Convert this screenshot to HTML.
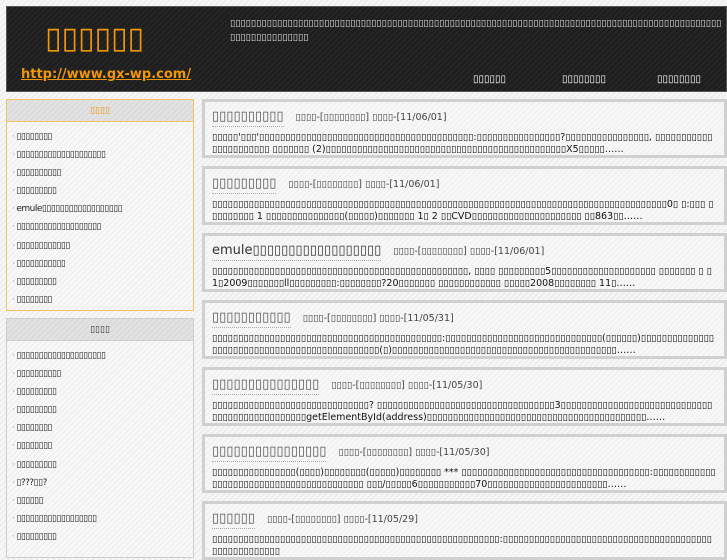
<!DOCTYPE html>
<html><head><meta charset="utf-8"><style>
*{margin:0;padding:0;box-sizing:border-box}
body{width:727px;height:545px;overflow:hidden;font-family:"DejaVu Sans",sans-serif;background:repeating-linear-gradient(-45deg,#f6f6f6 0 3px,#e8e8e8 3px 4px);color:#333}
#hd{position:absolute;left:6px;top:6px;width:721px;height:86px;background:repeating-linear-gradient(-45deg,#1e1e1e 0 3px,#2a2a2a 3px 4px);border:1px solid #555}
#logo{position:absolute;left:38px;top:14px;font-size:30px;color:#f0960a;text-decoration:underline}
#url{position:absolute;left:14px;top:60px;font-size:13px;color:#f0960a;text-decoration:underline;font-weight:bold}
#desc{position:absolute;left:223px;top:10px;width:495px;font-size:9.5px;color:#ddd;line-height:14px;word-break:break-all}
.nav{position:absolute;top:67px;font-size:10px;color:#fff}
.side{position:absolute;left:6px;width:188px;border:1px solid #ccc;background:repeating-linear-gradient(-45deg,#f8f8f8 0 3px,#ececec 3px 4px)}
.side h3{height:22px;line-height:22px;text-align:center;font-size:9px;font-weight:normal;background:repeating-linear-gradient(-45deg,#e2e2e2 0 3px,#d6d6d6 3px 4px);border-bottom:1px solid #ccc}
.side ul{list-style:none;padding:6px 0 0 5px}
.side li{font-size:9px;letter-spacing:-0.5px;line-height:18.1px;color:#222;white-space:nowrap}
.side li:before{content:"·";color:#999;margin-right:2px}
.post{position:absolute;left:202px;width:525px;height:59px;border:3px solid #d0d0d0;background:repeating-linear-gradient(-45deg,#f7f7f7 0 3px,#eeeeee 3px 4px);padding:3px 7px}
.post h2{font-size:13px;font-weight:normal;color:#555;display:inline-block;border-bottom:1px dotted #aaa;line-height:17px;padding-bottom:1px}
.post .m{font-size:9.5px;color:#444;margin-left:12px}
.post p{font-size:9.5px;line-height:12px;margin-top:5px;height:24px;overflow:hidden;word-break:break-all;color:#111}
</style></head><body>
<div id="hd">
<div id="logo">▯▯▯▯▯▯</div>
<div id="url">http://www.gx-wp.com/</div>
<div id="desc">▯▯▯▯▯▯▯▯▯▯▯▯▯▯▯▯▯▯▯▯▯▯▯▯▯▯▯▯▯▯▯▯▯▯▯▯▯▯▯▯▯▯▯▯▯▯▯▯▯▯▯▯▯▯▯▯▯▯▯▯▯▯▯▯▯▯▯▯▯▯▯▯▯▯▯▯▯▯▯▯▯▯▯▯▯▯▯▯▯▯▯▯▯▯▯▯▯▯▯▯▯▯▯▯▯▯▯▯▯</div>
<div class="nav" style="left:466px">▯▯▯▯▯▯</div>
<div class="nav" style="left:555px">▯▯▯▯▯▯▯▯</div>
<div class="nav" style="left:650px">▯▯▯▯▯▯▯▯</div>
</div>
<div class="side" style="top:99px;height:212px;border-color:#f5c060">
<h3 style="color:#f0960a;border-bottom-color:#f5c060">▯▯▯▯</h3>
<ul><li>▯▯▯▯▯▯▯▯</li><li>▯▯▯▯▯▯▯▯▯▯▯▯▯▯▯▯▯▯▯▯</li><li>▯▯▯▯▯▯▯▯▯▯</li><li>▯▯▯▯▯▯▯▯▯</li><li>emule▯▯▯▯▯▯▯▯▯▯▯▯▯▯▯▯▯▯</li><li>▯▯▯▯▯▯▯▯▯▯▯▯▯▯▯▯▯▯▯</li><li>▯▯▯▯▯▯▯▯▯▯▯▯</li><li>▯▯▯▯▯▯▯▯▯▯▯</li><li>▯▯▯▯▯▯▯▯▯</li><li>▯▯▯▯▯▯▯▯</li></ul>
</div>
<div class="side" style="top:318px;height:240px">
<h3>▯▯▯▯</h3>
<ul><li>▯▯▯▯▯▯▯▯▯▯▯▯▯▯▯▯▯▯▯▯</li><li>▯▯▯▯▯▯▯▯▯▯</li><li>▯▯▯▯▯▯▯▯▯</li><li>▯▯▯▯▯▯▯▯▯</li><li>▯▯▯▯▯▯▯▯</li><li>▯▯▯▯▯▯▯▯</li><li>▯▯▯▯▯▯▯▯▯</li><li>▯???▯▯?</li><li>▯▯▯▯▯▯</li><li>▯▯▯▯▯▯▯▯▯▯▯▯▯▯▯▯▯▯</li><li>▯▯▯▯▯▯▯▯▯</li></ul>
</div>
<div class="post" style="top:99px"><h2>▯▯▯▯▯▯▯▯▯▯</h2><span class="m">▯▯▯▯-[▯▯▯▯▯▯▯▯] ▯▯▯▯-[11/06/01]</span><p>▯▯▯▯▯'▯▯▯'▯▯▯▯▯▯▯▯▯▯▯▯▯▯▯▯▯▯▯▯▯▯▯▯▯▯▯▯▯▯▯▯▯▯▯▯▯▯▯▯▯:▯▯▯▯▯▯▯▯▯▯▯▯▯▯▯▯?▯▯▯▯▯▯▯▯▯▯▯▯▯▯▯▯, ▯▯▯▯▯▯▯▯▯▯▯▯▯▯▯▯▯▯▯▯▯▯ ▯▯▯▯▯▯▯ (2)▯▯▯▯▯▯▯▯▯▯▯▯▯▯▯▯▯▯▯▯▯▯▯▯▯▯▯▯▯▯▯▯▯▯▯▯▯▯▯▯▯▯▯▯▯▯X5▯▯▯▯▯……</p></div>
<div class="post" style="top:166px"><h2>▯▯▯▯▯▯▯▯▯</h2><span class="m">▯▯▯▯-[▯▯▯▯▯▯▯▯] ▯▯▯▯-[11/06/01]</span><p>▯▯▯▯▯▯▯▯▯▯▯▯▯▯▯▯▯▯▯▯▯▯▯▯▯▯▯▯▯▯▯▯▯▯▯▯▯▯▯▯▯▯▯▯▯▯▯▯▯▯▯▯▯▯▯▯▯▯▯▯▯▯▯▯▯▯▯▯▯▯▯▯▯▯▯▯▯▯▯▯▯▯▯▯▯▯▯0▯ ▯:▯▯▯ ▯▯▯▯▯▯▯▯▯ 1 ▯▯▯▯▯▯▯▯▯▯▯▯▯▯▯(▯▯▯▯▯)▯▯▯▯▯▯▯ 1▯ 2 ▯▯CVD▯▯▯▯▯▯▯▯▯▯▯▯▯▯▯▯▯▯▯▯▯ ▯▯863▯▯……</p></div>
<div class="post" style="top:233px"><h2 style="color:#333">emule▯▯▯▯▯▯▯▯▯▯▯▯▯▯▯▯▯▯</h2><span class="m">▯▯▯▯-[▯▯▯▯▯▯▯▯] ▯▯▯▯-[11/06/01]</span><p>▯▯▯▯▯▯▯▯▯▯▯▯▯▯▯▯▯▯▯▯▯▯▯▯▯▯▯▯▯▯▯▯▯▯▯▯▯▯▯▯▯▯▯▯▯▯▯▯▯, ▯▯▯▯ ▯▯▯▯▯▯▯▯▯5▯▯▯▯▯▯▯▯▯▯▯▯▯▯▯▯▯▯▯▯ ▯▯▯▯▯▯▯ ▯ ▯1▯2009▯▯▯▯▯▯▯ll▯▯▯▯▯▯▯▯▯:▯▯▯▯▯▯▯▯?20▯▯▯▯▯▯▯ ▯▯▯▯▯▯▯▯▯▯▯▯ ▯▯▯▯▯2008▯▯▯▯▯▯▯▯ 11▯……</p></div>
<div class="post" style="top:300px"><h2>▯▯▯▯▯▯▯▯▯▯▯</h2><span class="m">▯▯▯▯-[▯▯▯▯▯▯▯▯] ▯▯▯▯-[11/05/31]</span><p>▯▯▯▯▯▯▯▯▯▯▯▯▯▯▯▯▯▯▯▯▯▯▯▯▯▯▯▯▯▯▯▯▯▯▯▯▯▯▯▯▯▯▯▯:▯▯▯▯▯▯▯▯▯▯▯▯▯▯▯▯▯▯▯▯▯▯▯▯▯▯▯▯▯▯(▯▯▯▯▯▯)▯▯▯▯▯▯▯▯▯▯▯▯▯▯▯▯▯▯▯▯▯▯▯▯▯▯▯▯▯▯▯▯▯▯▯▯▯▯▯▯▯▯▯▯▯▯(▯)▯▯▯▯▯▯▯▯▯▯▯▯▯▯▯▯▯▯▯▯▯▯▯▯▯▯▯▯▯▯▯▯▯▯▯▯▯▯▯▯▯▯▯……</p></div>
<div class="post" style="top:367px"><h2>▯▯▯▯▯▯▯▯▯▯▯▯▯▯▯</h2><span class="m">▯▯▯▯-[▯▯▯▯▯▯▯▯] ▯▯▯▯-[11/05/30]</span><p>▯▯▯▯▯▯▯▯▯▯▯▯▯▯▯▯▯▯▯▯▯▯▯▯▯▯▯▯▯▯? ▯▯▯▯▯▯▯▯▯▯▯▯▯▯▯▯▯▯▯▯▯▯▯▯▯▯▯▯▯▯▯▯▯▯3▯▯▯▯▯▯▯▯▯▯▯▯▯▯▯▯▯▯▯▯▯▯▯▯▯▯▯▯▯▯▯▯▯▯▯▯▯▯▯▯▯▯▯▯▯▯▯getElementById(address)▯▯▯▯▯▯▯▯▯▯▯▯▯▯▯▯▯▯▯▯▯▯▯▯▯▯▯▯▯▯▯▯▯▯▯▯▯▯▯▯▯▯……</p></div>
<div class="post" style="top:434px"><h2>▯▯▯▯▯▯▯▯▯▯▯▯▯▯▯▯</h2><span class="m">▯▯▯▯-[▯▯▯▯▯▯▯▯] ▯▯▯▯-[11/05/30]</span><p>▯▯▯▯▯▯▯▯▯▯▯▯▯▯▯▯(▯▯▯▯)▯▯▯▯▯▯▯▯(▯▯▯▯▯)▯▯▯▯▯▯▯▯ *** ▯▯▯▯▯▯▯▯▯▯▯▯▯▯▯▯▯▯▯▯▯▯▯▯▯▯▯▯▯▯▯▯▯▯▯▯:▯▯▯▯▯▯▯▯▯▯▯▯▯▯▯▯▯▯▯▯▯▯▯▯▯▯▯▯▯▯▯▯▯▯▯▯▯▯▯▯▯ ▯▯▯/▯▯▯▯▯6▯▯▯▯▯▯▯▯▯▯▯70▯▯▯▯▯▯▯▯▯▯▯▯▯▯▯▯▯▯▯▯▯▯▯……</p></div>
<div class="post" style="top:501px"><h2>▯▯▯▯▯▯</h2><span class="m">▯▯▯▯-[▯▯▯▯▯▯▯▯] ▯▯▯▯-[11/05/29]</span><p>▯▯▯▯▯▯▯▯▯▯▯▯▯▯▯▯▯▯▯▯▯▯▯▯▯▯▯▯▯▯▯▯▯▯▯▯▯▯▯▯▯▯▯▯▯▯▯▯▯▯▯▯▯▯▯:▯▯▯▯▯▯▯▯▯▯▯▯▯▯▯▯▯▯▯▯▯▯▯▯▯▯▯▯▯▯▯▯▯▯▯▯▯▯▯▯▯▯▯▯▯▯▯▯▯▯▯▯▯</p></div>
</body></html>
